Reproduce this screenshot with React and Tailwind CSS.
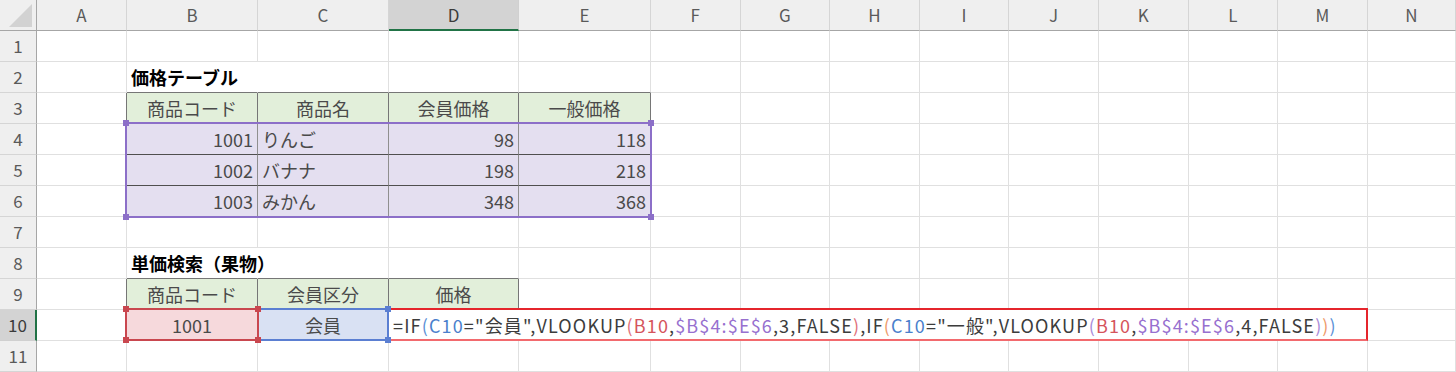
import React from 'react';

const COLS = ['A', 'B', 'C', 'D', 'E', 'F', 'G', 'H', 'I', 'J', 'K', 'L', 'M', 'N'];
const ROWS = [1, 2, 3, 4, 5, 6, 7, 8, 9, 10, 11];
const TRACKS = 'grid grid-cols-[37px_90px_131px_131px_130px_132px_repeat(8,89.6px)_1fr] grid-rows-[31px_repeat(11,31px)]';

// cell contents keyed by "row-col" (col 0 = A)
const CELLS = {
  '2-1': { t: '価格テーブル', kind: 'title' },
  '3-1': { t: '商品コード', kind: 'head' },
  '3-2': { t: '商品名', kind: 'head' },
  '3-3': { t: '会員価格', kind: 'head' },
  '3-4': { t: '一般価格', kind: 'head' },
  '4-1': { t: '1001', kind: 'num' },
  '4-2': { t: 'りんご', kind: 'txt' },
  '4-3': { t: '98', kind: 'num' },
  '4-4': { t: '118', kind: 'num' },
  '5-1': { t: '1002', kind: 'num' },
  '5-2': { t: 'バナナ', kind: 'txt' },
  '5-3': { t: '198', kind: 'num' },
  '5-4': { t: '218', kind: 'num' },
  '6-1': { t: '1003', kind: 'num' },
  '6-2': { t: 'みかん', kind: 'txt' },
  '6-3': { t: '348', kind: 'num' },
  '6-4': { t: '368', kind: 'num' },
  '8-1': { t: '単価検索（果物）', kind: 'title' },
  '9-1': { t: '商品コード', kind: 'head' },
  '9-2': { t: '会員区分', kind: 'head' },
  '9-3': { t: '価格', kind: 'head' },
  '10-1': { t: '1001', kind: 'code' },
  '10-2': { t: '会員', kind: 'member' },
};

const FORMULA = [
  ['=IF', 'text-[#3c3c3c]'],
  ['(', 'text-[#5b8fd6]'],
  ['C10', 'text-[#4a7fcc]'],
  ['="会員",VLOOKUP', 'text-[#3c3c3c]'],
  ['(', 'text-[#e0707a]'],
  ['B10', 'text-[#d5545c]'],
  [',', 'text-[#3c3c3c]'],
  ['$B$4:$E$6', 'text-[#9770cf]'],
  [',3,FALSE', 'text-[#3c3c3c]'],
  [')', 'text-[#e0707a]'],
  [',IF', 'text-[#3c3c3c]'],
  ['(', 'text-[#ee9a6a]'],
  ['C10', 'text-[#4a7fcc]'],
  ['="一般",VLOOKUP', 'text-[#3c3c3c]'],
  ['(', 'text-[#a98ad8]'],
  ['B10', 'text-[#d5545c]'],
  [',', 'text-[#3c3c3c]'],
  ['$B$4:$E$6', 'text-[#9770cf]'],
  [',4,FALSE', 'text-[#3c3c3c]'],
  [')', 'text-[#a98ad8]'],
  [')', 'text-[#ee9a6a]'],
  [')', 'text-[#5b8fd6]'],
];

function borderRight(r, c) {
  if ((r === 2 || r === 8) && c === 1) return 'border-r-transparent';
  if (c === 0 && ((r >= 3 && r <= 6) || r === 9 || r === 10)) return 'border-r-[#767676]';
  if (r === 3 && c >= 1 && c <= 4) return 'border-r-[#767676]';
  if (r === 9 && c >= 1 && c <= 3) return 'border-r-[#767676]';
  if (r >= 4 && r <= 6 && c >= 1 && c <= 4) return 'border-r-[#8f8f8f]';
  return 'border-r-[#e0e0e0]';
}

function borderBottom(r, c) {
  if ((r === 2 || r === 3) && c >= 1 && c <= 4) return 'border-b-[#767676]';
  if ((r === 8 || r === 9) && c >= 1 && c <= 3) return 'border-b-[#767676]';
  if (r >= 4 && r <= 6 && c >= 1 && c <= 4) return 'border-b-[#4f4f4f]';
  return 'border-b-[#e0e0e0]';
}

function Cell({ r, c }) {
  const cell = CELLS[`${r}-${c}`];
  let fill = '';
  let align = 'justify-start';
  let tone = 'text-[#4a4a4a]';
  if (cell) {
    if (cell.kind === 'title') tone = 'text-black font-bold';
    if (cell.kind === 'head') { fill = 'bg-[#e2efda]'; align = 'justify-center'; }
    if (cell.kind === 'num') align = 'justify-end';
    if (cell.kind === 'code') { fill = 'bg-[#f6d9dc]'; align = 'justify-center'; }
    if (cell.kind === 'member') { fill = 'bg-[#d9e1f3]'; align = 'justify-center'; }
  }
  if (r >= 4 && r <= 6 && c >= 1 && c <= 4) fill = 'bg-[#e4dff0]';
  return (
    <div className={`flex items-center border-r border-b px-1 text-[18px] leading-none whitespace-nowrap ${borderRight(r, c)} ${borderBottom(r, c)} ${fill} ${align} ${tone}`}>
      {cell ? cell.t : null}
    </div>
  );
}

// small square grip on a corner of a reference box
function Handle({ className }) {
  return <span className={`absolute w-[6px] h-[6px] ${className}`} />;
}

export default function App() {
  return (
    <div className="grid w-[1456px] h-[372px] bg-white overflow-hidden" style={{ fontFamily: '"Noto Sans CJK JP", "Noto Sans", sans-serif' }}>
      {/* sheet */}
      <div className={`${TRACKS} col-start-1 row-start-1`}>
        {/* corner */}
        <div className="flex items-end justify-end pr-[4px] pb-[3px] bg-[#efefef] border-r border-b border-r-[#a6a6a6] border-b-[#a6a6a6]">
          <svg width="23" height="23" viewBox="0 0 23 23">
            <polygon points="23,0 23,23 0,23" fill="#d2d2d2" />
          </svg>
        </div>
        {/* column headers */}
        {COLS.map(col => (
          <div
            key={col}
            className={col === 'D'
              ? 'flex items-center justify-center bg-[#d3d3d3] border-r border-b-2 border-r-[#d0d0d0] border-b-[#217346] text-[17px] text-[#3b3b3b]'
              : 'flex items-center justify-center bg-[#efefef] border-r border-b border-r-[#d5d5d5] border-b-[#a6a6a6] text-[17px] text-[#5a5a5a]'}
          >
            {col}
          </div>
        ))}
        {ROWS.map(r => (
          <React.Fragment key={r}>
            <div
              className={r === 10
                ? 'flex items-center justify-center bg-[#d3d3d3] border-r-2 border-b border-r-[#217346] border-b-[#d0d0d0] text-[17px] text-[#3b3b3b]'
                : 'flex items-center justify-center bg-[#efefef] border-r border-b border-r-[#a6a6a6] border-b-[#d5d5d5] text-[17px] text-[#5a5a5a]'}
            >
              {r}
            </div>
            {COLS.map((col, c) => <Cell key={col} r={r} c={c} />)}
          </React.Fragment>
        ))}
      </div>

      {/* reference highlights, laid on the same tracks */}
      <div className={`${TRACKS} col-start-1 row-start-1 pointer-events-none`}>
        {/* $B$4:$E$6 */}
        <div className="relative col-start-3 col-end-7 row-start-5 row-end-8 -ml-[2px] -mr-px -mt-[2px] -mb-px border-2 border-[#8c6fc8]">
          <Handle className="-left-[4px] -top-[4px] bg-[#8c6fc8]" />
          <Handle className="-right-[4px] -top-[4px] bg-[#8c6fc8]" />
          <Handle className="-left-[4px] -bottom-[4px] bg-[#8c6fc8]" />
          <Handle className="-right-[4px] -bottom-[4px] bg-[#8c6fc8]" />
        </div>

        {/* C10 */}
        <div className="relative col-start-4 col-end-5 row-start-11 row-end-12 -ml-px -mt-[2px] border-2 border-[#5b7fd2]">
          <Handle className="-right-[4px] -top-[4px] bg-[#5b7fd2]" />
          <Handle className="-right-[4px] -bottom-[4px] bg-[#5b7fd2]" />
        </div>

        {/* B10 */}
        <div className="relative col-start-3 col-end-4 row-start-11 row-end-12 -ml-[2px] -mr-px -mt-[2px] border-2 border-[#c9474f]">
          <Handle className="-left-[4px] -top-[4px] bg-[#c9474f]" />
          <Handle className="-right-[4px] -top-[4px] bg-[#c9474f]" />
          <Handle className="-left-[4px] -bottom-[4px] bg-[#c9474f]" />
          <Handle className="-right-[4px] -bottom-[4px] bg-[#c9474f]" />
        </div>

        {/* D10 in edit mode */}
        <div className="col-start-5 col-end-15 row-start-11 row-end-12 -ml-[2px] -mt-[2px] flex items-center bg-white border-2 border-[#e5252c] border-b-[#f26a6e] pl-[4px] text-[18px] leading-none tracking-[1.15px] whitespace-nowrap">
          {FORMULA.map(([s, cls], i) => <span key={i} className={cls}>{s}</span>)}
        </div>
      </div>
    </div>
  );
}
